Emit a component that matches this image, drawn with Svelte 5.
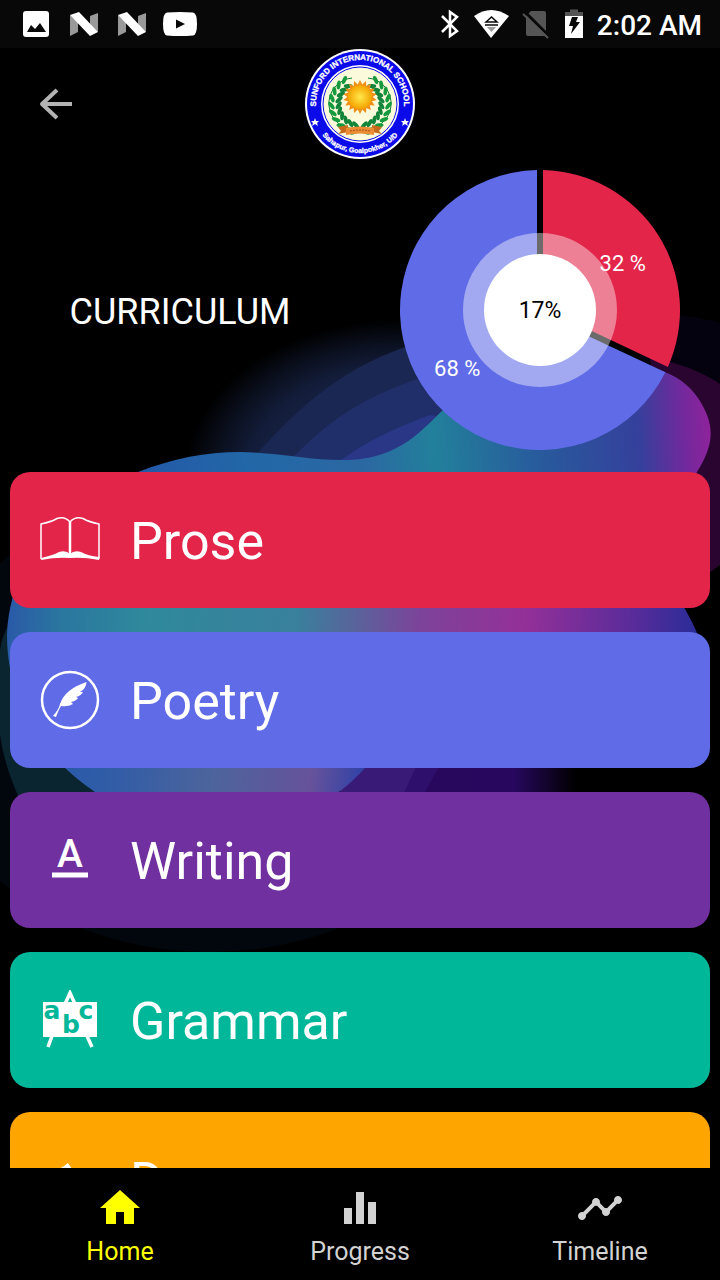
<script>
	const slices = [
		{ value: 32, color: '#e22549' },
		{ value: 68, color: '#606ce7' }
	];

	const lessons = [
		{ name: 'Prose', icon: 'book', color: '#e22549' },
		{ name: 'Poetry', icon: 'feather', color: '#606ce7' },
		{ name: 'Writing', icon: 'letter', color: '#71309f' },
		{ name: 'Grammar', icon: 'board', color: '#00b899' },
		{ name: 'Drama', icon: 'masks', color: '#ffa500' }
	];

	const tabs = [
		{
			name: 'Home',
			path: 'M10 20v-6h4v6h5v-8h3L12 3 2 12h3v8z'
		},
		{
			name: 'Progress',
			path: 'M10 20h4V4h-4v16zm-6 0h4v-8H4v8zM16 9v11h4V9h-4z'
		},
		{
			name: 'Timeline',
			path: 'M23 8c0 1.1-.9 2-2 2-.18 0-.35-.02-.51-.07l-3.56 3.55c.05.16.07.34.07.52 0 1.1-.9 2-2 2s-2-.9-2-2c0-.18.02-.36.07-.52l-2.55-2.55c-.16.05-.34.07-.52.07s-.36-.02-.52-.07l-4.55 4.56c.05.16.07.33.07.51 0 1.1-.9 2-2 2s-2-.9-2-2 .9-2 2-2c.18 0 .35.02.51.07l4.56-4.55C8.02 9.36 8 9.18 8 9c0-1.1.9-2 2-2s2 .9 2 2c0 .18-.02.36-.07.52l2.55 2.55c.16-.05.34-.07.52-.07s.36.02.52.07l3.55-3.56C19.02 8.35 19 8.18 19 8c0-1.1.9-2 2-2s2 .9 2 2z'
		}
	];

	let activeTab = $state('Home');

	// Pie geometry, centred on 0,0
	const RADIUS = 140;
	const HALF_GAP = 3;
	const LABEL_RADIUS = 98;

	function point(angle, radius) {
		return [radius * Math.sin(angle), -radius * Math.cos(angle)];
	}

	// Each slice is pulled in by half the gap so the edges stay parallel
	function buildPie(data) {
		const inset = Math.asin(HALF_GAP / RADIUS);
		let start = 0;

		return data.map((slice) => {
			const sweep = (slice.value / 100) * Math.PI * 2;
			const end = start + sweep;
			const middle = start + sweep / 2;
			const apex = point(middle, HALF_GAP / Math.sin(sweep / 2));
			const from = point(start + inset, RADIUS);
			const to = point(end - inset, RADIUS);
			const large = sweep > Math.PI ? 1 : 0;
			const label = point(middle, LABEL_RADIUS);
			start = end;

			return {
				...slice,
				d: `M${apex} L${from} A${RADIUS} ${RADIUS} 0 ${large} 1 ${to} Z`,
				x: label[0],
				y: label[1] + 13
			};
		});
	}

	const pie = buildPie(slices);

	// Leaves of the wreath on the school badge
	const leaves = Array.from({ length: 10 }, (_, i) => 12 + i * 15);

	const rays = Array.from({ length: 18 }, (_, i) => i * 20);
</script>

<svelte:head>
	<title>Curriculum</title>
</svelte:head>

<div class="app">
	<svg class="backdrop" viewBox="0 0 720 1280" preserveAspectRatio="xMidYMid slice" aria-hidden="true">
		<defs>
			<radialGradient id="glow">
				<stop offset="0" stop-color="#1c2e6c" />
				<stop offset="0.7" stop-color="#131d3a" />
				<stop offset="0.85" stop-color="#0b101f" />
				<stop offset="1" stop-color="#000" />
			</radialGradient>
			<linearGradient id="top" gradientUnits="userSpaceOnUse" x1="130" y1="470" x2="715" y2="430">
				<stop offset="0" stop-color="#2458a8" />
				<stop offset="0.2" stop-color="#2267a7" />
				<stop offset="0.4" stop-color="#2b68a2" />
				<stop offset="0.52" stop-color="#22809b" />
				<stop offset="0.7" stop-color="#285a9c" />
				<stop offset="0.87" stop-color="#35409c" />
				<stop offset="0.95" stop-color="#74289c" />
				<stop offset="1" stop-color="#94229c" />
			</linearGradient>
			<linearGradient id="middle" gradientUnits="userSpaceOnUse" x1="5" y1="620" x2="695" y2="660">
				<stop offset="0" stop-color="#2a58a8" />
				<stop offset="0.08" stop-color="#2a769f" />
				<stop offset="0.2" stop-color="#2f899c" />
				<stop offset="0.42" stop-color="#39809c" />
				<stop offset="0.6" stop-color="#7d439a" />
				<stop offset="0.75" stop-color="#943098" />
				<stop offset="0.9" stop-color="#5c2c9a" />
				<stop offset="1" stop-color="#2a2c98" />
			</linearGradient>
			<linearGradient id="bottom" gradientUnits="userSpaceOnUse" x1="60" y1="760" x2="365" y2="800">
				<stop offset="0" stop-color="#285aa8" />
				<stop offset="0.2" stop-color="#335da6" />
				<stop offset="0.5" stop-color="#4d649c" />
				<stop offset="0.82" stop-color="#66529b" />
				<stop offset="1" stop-color="#2b40a8" />
			</linearGradient>
			<linearGradient id="night">
				<stop offset="0" stop-color="#28085c" />
				<stop offset="0.6" stop-color="#27085e" />
				<stop offset="1" stop-color="#000" />
			</linearGradient>
			<clipPath id="blob">
				<path
					d="M138 472C175 458 205 452 240 452C285 453 310 461 350 460C400 457 420 432 445 408C480 375 540 364 600 363C640 362 678 368 698 398C716 425 714 445 697 472C680 510 650 540 670 585C685 608 702 635 704 660C706 700 600 690 480 700C420 710 390 740 365 768C310 830 200 860 95 792C40 755 7 700 7 635C10 560 60 505 138 472Z"
				/>
			</clipPath>
		</defs>

		<ellipse cx="210" cy="722" rx="290" ry="230" fill="#02070e" />
		<path d="M0 650Q4 620 30 605H120V800H20Q4 765 0 735Z" fill="#0b2530" />

		<ellipse cx="400" cy="475" rx="215" ry="155" fill="url(#glow)" />
		<path d="M255 456C300 405 345 365 420 342L560 400V470H255Z" fill="#1a2752" />
		<path d="M292 458C325 425 355 400 420 378L560 420V470H292Z" fill="#202e6a" />
		<path d="M338 462C365 443 385 432 430 415L560 430V470H338Z" fill="#293786" />

		<path d="M640 312Q690 314 720 323V390L640 370Z" fill="#05020f" />
		<path d="M650 358Q690 364 720 384V565Q700 580 680 590Z" fill="#2a0530" />

		<rect x="420" y="765" width="156" height="32" fill="url(#night)" />
		<path d="M340 765H440L422 797H340Z" fill="#2f0f6c" />
		<path d="M340 765H417L402 797H340Z" fill="#391a76" />

		<g clip-path="url(#blob)">
			<rect y="330" width="720" height="210" fill="url(#top)" />
			<rect y="540" width="720" height="160" fill="url(#middle)" />
			<rect y="700" width="720" height="150" fill="url(#bottom)" />
		</g>
	</svg>

	<div class="status-bar">
		<div class="status-group">
			<svg viewBox="0 0 48 48">
				<path
					fill="#fff"
					fill-rule="evenodd"
					d="M14 11H34Q37 11 37 14V34Q37 37 34 37H14Q11 37 11 34V14Q11 11 14 11ZM15 32H34L28 23L23 29L19 25Z"
				/>
			</svg>
			{#each [1, 2] as n (n)}
				<svg viewBox="0 0 48 48">
					<path fill="#999" d="M10 15L18 22V32L10 36ZM30 16L38 13V32L30 25Z" />
					<path fill="#fff" d="M10 15L19 12L38 32L30 36Z" />
				</svg>
			{/each}
			<svg viewBox="0 0 48 48">
				<path
					fill="#fff"
					fill-rule="evenodd"
					d="M11 12.500Q24 11.500 37 12.500Q41 13 41 24Q41 35 37 35.500Q24 36.500 11 35.500Q7 35 7 24Q7 13 11 12.500ZM20 19.500V28.500L29 24Z"
				/>
			</svg>
		</div>
		<div class="status-group right">
			<svg viewBox="0 0 42 48">
				<path
					d="M13 16L28 31L21 36V12L28 17L13 32"
					fill="none"
					stroke="#fff"
					stroke-width="2.500"
				/>
			</svg>
			<svg viewBox="0 0 42 48">
				<path d="M3 16Q20 4 38 16L20 38Z" fill="#fff" />
				<path d="M15 22L20.500 17L26 22ZM14 25H27" fill="none" stroke="#080808" stroke-width="1.500" />
				<path d="M16 27H25L20.500 32Z" fill="#080808" opacity="0.4" />
			</svg>
			<svg viewBox="0 0 42 48">
				<path d="M13 16L18 11H31Q33 11 33 13V36H15Q13 36 13 34Z" fill="#555" />
				<path d="M12 12L37 37" stroke="#080808" stroke-width="3" />
				<path d="M10 14L35 38" stroke="#555" stroke-width="2" />
			</svg>
			<svg viewBox="0 0 42 48">
				<path d="M15 9.500H23V12H28V16H10V12H15Z" fill="#555" />
				<path d="M10 16H28V38H10Z" fill="#fff" />
				<path d="M17 17H23L21 22H25L16 34L18 26H14Z" fill="#080808" />
			</svg>
			<time>2:02 AM</time>
		</div>
	</div>

	<header>
		<button class="back" aria-label="Back">
			<svg viewBox="0 0 48 48">
				<path
					d="M25 10L10 24L25 38M11 24H40"
					fill="none"
					stroke="#b3b3b3"
					stroke-width="4"
					stroke-linejoin="round"
				/>
			</svg>
		</button>
		<svg class="badge" viewBox="-56 -56 112 112" role="img" aria-label="Sunford International School">
			<defs>
				<path id="ring-top" d="M-42.300 12A44 44 0 1 1 42.300 12" />
				<path id="ring-bottom" d="M-49 0A49 49 0 0 0 49 0" />
				<radialGradient id="sun">
					<stop offset="0" stop-color="#ffe94a" />
					<stop offset="1" stop-color="#f5a400" />
				</radialGradient>
			</defs>
			<circle r="55" fill="#fff" />
			<circle r="53" fill="#0b0bea" />
			<circle r="39" fill="#fff" />
			<circle r="37" fill="#fbfadb" stroke="#0b0bea" />
			<text class="ring-name">
				<textPath href="#ring-top" startOffset="50%">SUNFORD INTERNATIONAL SCHOOL</textPath>
			</text>
			<text class="ring-place">
				<textPath href="#ring-bottom" startOffset="50%">Sahapur, Goalpokher, U/D</textPath>
			</text>
			{#each [-45, 45] as x (x)}
				<path
					transform="translate({x} 18)"
					fill="#fff"
					d="M0-4L1-1H4L2 1L3 4L0 2L-3 4L-2 1L-4-1H-1Z"
				/>
			{/each}
			{#each [1, -1] as side (side)}
				<g transform="scale({side} 1)">
					<path d="M3 25A25 25 0 0 0 8-26" fill="none" stroke="#16803a" />
					{#each leaves as angle (angle)}
						<g transform="rotate({-angle}) translate(0 25)">
							<ellipse cx="2" cy="3" rx="4.500" ry="2" transform="rotate(35)" fill="#169a3e" />
							<ellipse cx="2" cy="-3" rx="4.500" ry="2" transform="rotate(-35)" fill="#12843a" />
						</g>
					{/each}
				</g>
			{/each}
			{#each rays as angle (angle)}
				<path d="M-3-11L0-17L3-11Z" transform="translate(0 -7) rotate({angle})" fill="#f09018" />
			{/each}
			<circle cy="-7" r="12" fill="url(#sun)" />
			<path d="M-22 23L-12 21V28L-22 30L-19 27ZM22 23L12 21V28L22 30L19 27Z" fill="#c66a1c" />
			<path d="M-14 24Q0 21 14 24V31Q0 28 -14 31Z" fill="#ec8d35" />
			<path d="M-10 27Q0 25 10 27" stroke="#a35312" stroke-dasharray="2 1" fill="none" />
		</svg>
	</header>

	<section class="summary">
		<h1>CURRICULUM</h1>
		<svg class="pie" viewBox="-140 -140 280 280" role="img" aria-label="Curriculum progress">
			{#each pie as slice (slice.value)}
				<path d={slice.d} fill={slice.color} />
			{/each}
			<circle r="77" fill="#fff" fill-opacity="0.42" />
			<circle r="56" fill="#fff" />
			{#each pie as slice (slice.value)}
				<text class="slice-label" x={slice.x} y={slice.y}>{slice.value} %</text>
			{/each}
			<text class="total" y="8">17%</text>
		</svg>
	</section>

	<main>
		{#each lessons as lesson (lesson.name)}
			<button class="lesson" style="--tone: {lesson.color}">
				<svg viewBox="0 0 60 60" aria-hidden="true">
					{#if lesson.icon === 'book'}
						<path
							d="M1 49V14Q11 12 17 8.500Q25 6 30 12Q35 6 43 8.500Q49 12 59 14V49"
							fill="none"
							stroke="#fff"
							stroke-width="1.500"
						/>
						<path d="M30 12V46" stroke="#fff" stroke-width="2.500" />
						<path d="M1 48Q14 45 19 42Q26 40 30 44Q34 40 41 42Q48 46 59 47V50Q44 47 30 48Q16 47 1 50Z" fill="#fff" />
					{:else if lesson.icon === 'feather'}
						<circle cx="30" cy="30" r="28" fill="none" stroke="#fff" stroke-width="2.500" />
						<path
							d="M46.500 12Q25 19 20 34Q19 39 13 46L16 47Q18 41 21 36Q28 37 33 34L31 32Q36 31 38 28L36 27Q41 26 43 22L40 22Q46 19 46.500 12Z"
							fill="#fff"
						/>
					{:else if lesson.icon === 'letter'}
						<text class="big-a" x="30" y="37">A</text>
						<path d="M12 42.500H48V47.500H12Z" fill="#fff" />
					{:else if lesson.icon === 'board'}
						<path
							d="M25 14L30 3L35 14M12 46L8 57M47 46L52 57"
							fill="none"
							stroke="#fff"
							stroke-width="3.500"
						/>
						<path d="M3 12H57V47H3Z" fill="#fff" />
						<text class="abc" x="12" y="29">a</text>
						<text class="abc" x="31" y="43">b</text>
						<text class="abc" x="46" y="29">c</text>
					{:else}
						<path
							d="M9 22Q20 20 28 13L34 22Q38 34 30 42Q16 42 9 22ZM30 18Q40 24 52 22Q52 44 36 48Q31 46 30 42Z"
							fill="#fff"
						/>
					{/if}
				</svg>
				<span>{lesson.name}</span>
			</button>
		{/each}
	</main>

	<nav>
		{#each tabs as tab (tab.name)}
			<a
				href="#{tab.name.toLowerCase()}"
				class:active={activeTab === tab.name}
				onclick={() => (activeTab = tab.name)}
			>
				<svg viewBox="0 0 24 24" aria-hidden="true"><path d={tab.path} /></svg>
				{tab.name}
			</a>
		{/each}
	</nav>
</div>

<style>
	:global(body) {
		background: #000;
	}

	.app {
		position: relative;
		display: flex;
		flex-direction: column;
		height: 100vh;
		overflow: hidden;
		background: #000;
		color: #fff;
		font-family: Roboto, 'Noto Sans', sans-serif;
	}

	svg {
		display: block;
		flex: none;
	}

	/* Sits behind everything else on the page */
	.backdrop {
		position: absolute;
		inset: 0;
		width: 100%;
		height: 100%;
	}

	.status-bar,
	header,
	.summary,
	main,
	nav {
		position: relative;
	}

	.status-bar {
		display: flex;
		justify-content: space-between;
		height: 48px;
		padding: 0 18px 0 12px;
		background: #080808;
	}

	.status-group {
		display: flex;
		align-items: center;
	}

	.status-group svg {
		width: 48px;
		height: 48px;
	}

	.status-group.right svg {
		width: 42px;
	}

	time {
		padding-top: 2px;
		font-size: 28px;
		font-weight: 500;
	}

	header {
		display: grid;
		grid-template-columns: 1fr auto 1fr;
		align-items: center;
		padding: 0 32px;
	}

	.back {
		width: 48px;
		height: 48px;
		padding: 0;
		border: 0;
		background: none;
		cursor: pointer;
	}

	.badge {
		width: 112px;
		height: 112px;
	}

	.ring-name,
	.ring-place {
		fill: #fff;
		stroke: #fff;
		stroke-width: 0.3px;
		font-family: 'Liberation Sans', Arial, sans-serif;
		font-weight: 700;
		text-anchor: middle;
	}

	.ring-name {
		font-size: 8px;
	}

	.ring-place {
		font-size: 7px;
	}

	.summary {
		display: grid;
		grid-template-columns: 1fr 1fr;
		place-items: center;
		padding: 10px 0;
	}

	h1 {
		margin: 0;
		padding-top: 4px;
		font-size: 36px;
		font-weight: 400;
	}

	.pie {
		width: 280px;
		height: 280px;
	}

	.slice-label,
	.total {
		fill: #fff;
		font-size: 22px;
		text-anchor: middle;
	}

	.total {
		fill: #000;
		font-size: 23px;
	}

	main {
		display: flex;
		flex: 1;
		flex-direction: column;
		gap: 24px;
		min-height: 0;
		padding: 12px 10px;
		overflow-y: auto;
		scrollbar-width: none;
	}

	.lesson {
		display: flex;
		flex: none;
		align-items: center;
		gap: 30px;
		height: 136px;
		padding: 0 30px;
		border: 0;
		border-radius: 20px;
		background: var(--tone);
		color: #fff;
		font-family: inherit;
		font-size: 52px;
		text-align: left;
		cursor: pointer;
	}

	.lesson svg {
		width: 60px;
		height: 60px;
	}

	.lesson span {
		padding-top: 2px;
	}

	.big-a {
		fill: #fff;
		font-size: 39px;
		font-weight: 500;
		text-anchor: middle;
	}

	.abc {
		fill: var(--tone);
		font-family: 'DejaVu Sans', sans-serif;
		font-size: 25px;
		font-weight: 700;
		text-anchor: middle;
	}

	nav {
		display: grid;
		grid-template-columns: repeat(3, 1fr);
		padding: 16px 0 8px;
		background: #000;
	}

	nav a {
		display: flex;
		flex-direction: column;
		align-items: center;
		color: #d3d3d3;
		font-size: 25px;
		line-height: 40px;
		text-decoration: none;
	}

	nav a.active {
		color: #ff0;
	}

	nav svg {
		width: 48px;
		height: 48px;
		fill: currentColor;
	}
</style>
